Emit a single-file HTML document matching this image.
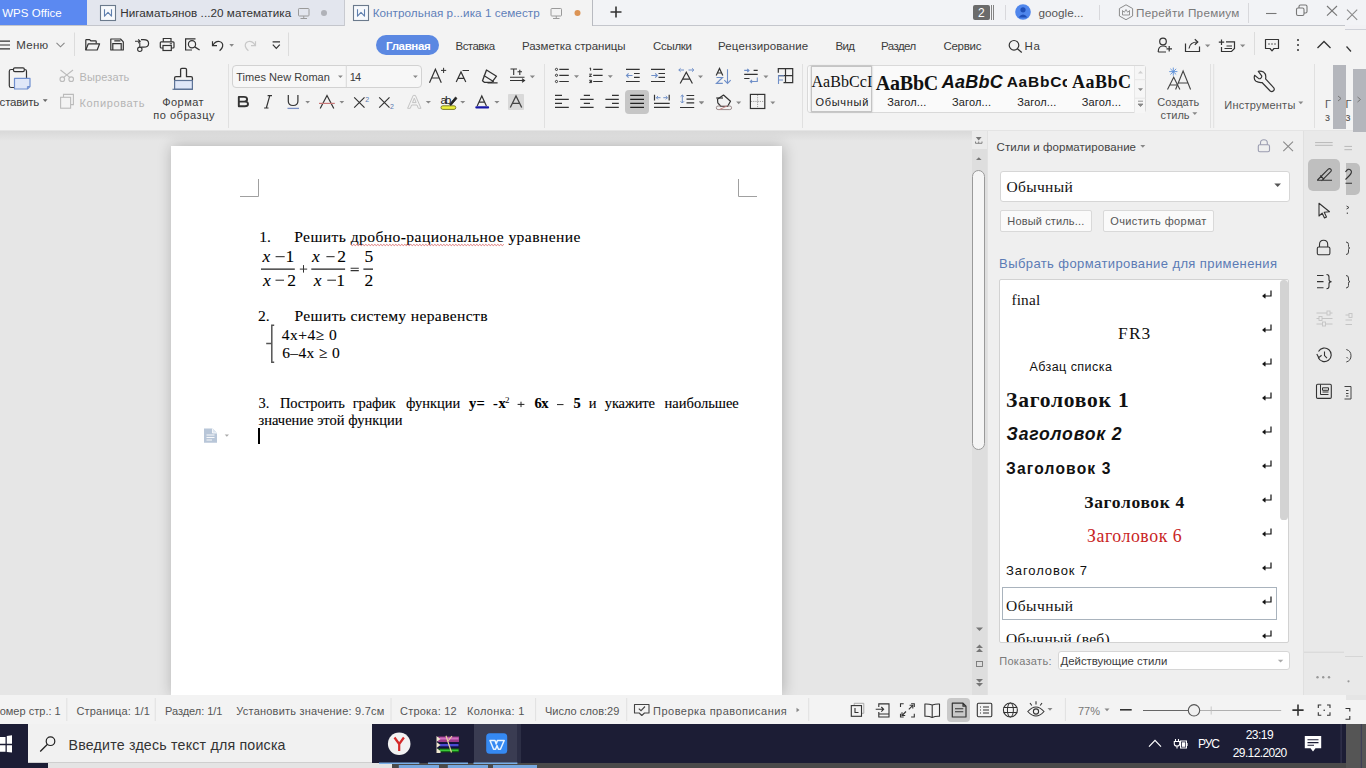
<!DOCTYPE html>
<html><head><meta charset="utf-8">
<style>
*{margin:0;padding:0;box-sizing:border-box}
html,body{width:1366px;height:768px;overflow:hidden;background:#f3f3f3;font-family:"Liberation Sans",sans-serif;position:relative}
.a{position:absolute}
.t{position:absolute;white-space:nowrap;-webkit-font-smoothing:antialiased}
svg{position:absolute;overflow:visible}
</style></head><body>
<div class="a" style="left:0px;top:0px;width:1366px;height:26px;background:#f2f3f6;border-bottom:1px solid #c4c6cc"></div>
<div class="a" style="left:0px;top:0px;width:87px;height:25px;background:#5b89f1;"></div>
<div class="a" style="left:87px;top:0px;width:257px;height:25px;background:#e3e6ee;"></div>
<div class="a" style="left:344px;top:0px;width:248.8px;height:26px;background:#f3f3f3;border-left:1px solid #c8cad0;border-right:1px solid #b8bac0"></div>
<div class="a" style="left:0px;top:26px;width:1366px;height:105px;background:#f3f3f3;border-bottom:1px solid #e4e4e4"></div>
<div class="a" style="left:0px;top:131px;width:972px;height:564px;background:#e6e6e6;"></div>
<div class="a" style="left:0px;top:131px;width:972px;height:10px;background:linear-gradient(#d9d9d9,#e6e6e6);"></div>
<div class="a" style="left:171px;top:146px;width:611px;height:549px;background:#fff;box-shadow:1px 0 14px rgba(0,0,0,0.24)"></div>
<div class="a" style="left:972px;top:131px;width:15px;height:564px;background:#dedede;"></div>
<div class="a" style="left:972px;top:131px;width:15px;height:17.5px;background:#ebebeb;"></div>
<div class="a" style="left:987px;top:131px;width:316px;height:564px;background:#efefef;border-left:1px solid #e2e2e2"></div>
<div class="a" style="left:1303px;top:131px;width:63px;height:564px;background:#e9e9e9;border-left:1px solid #e0e0e0"></div>
<div class="a" style="left:0px;top:695px;width:1366px;height:29px;background:#f3f3f3;"></div>
<div class="a" style="left:0px;top:724px;width:1346px;height:40px;background:#1c1d35;"></div>
<div class="a" style="left:0px;top:763px;width:1366px;height:5px;background:#4a4a4a;"></div>
<div class="a" style="left:0px;top:763px;width:48px;height:5px;background:#1c1d35;"></div>
<div class="a" style="left:48px;top:763px;width:344px;height:5px;background:#e4e4e4;"></div>
<div class="a" style="left:1346px;top:724px;width:20px;height:44px;background:#555555;"></div>
<div class="a" style="left:28px;top:724px;width:344px;height:39px;background:#f1f1f1;border-bottom:1px solid #cfcfcf"></div>
<div class="a" style="left:231.5px;top:64.5px;width:190px;height:23px;background:#f7f7f7;border:1px solid #d2d2d2;border-radius:4px"></div>
<div class="a" style="left:973px;top:4.5px;width:17px;height:15.5px;background:#6b6b6b;border-radius:2px"></div>
<div class="a" style="left:807.3px;top:64.6px;width:339.1px;height:48.6px;background:#fafafa;border:1px solid #d9d9d9;border-radius:3px"></div>
<div class="a" style="left:810.5px;top:66.4px;width:61.5px;height:45.4px;background:#f5f5f5;border:1px solid #c4c4c4;box-shadow:0 0 2px rgba(0,0,0,0.25)"></div>
<div class="a" style="left:1134.3px;top:65.5px;width:11.2px;height:47px;background:#f6f6f6;border-left:1px solid #e8e8e8"></div>
<div class="a" style="left:1000px;top:171px;width:289.5px;height:30.5px;background:#fff;border:1px solid #d6d6d6;border-radius:3px"></div>
<div class="a" style="left:1000px;top:209.8px;width:91.5px;height:21.8px;background:#fafafa;border:1px solid #d9d9d9;border-radius:2px"></div>
<div class="a" style="left:1102.6px;top:209.8px;width:111px;height:21.8px;background:#fafafa;border:1px solid #d9d9d9;border-radius:2px"></div>
<div class="a" style="left:999.4px;top:278.6px;width:289.5px;height:364.5px;background:#fff;border:1px solid #d2d2d2;border-radius:2px"></div>
<div class="a" style="left:1002px;top:586.7px;width:275px;height:33px;background:#fff;border:1px solid #a9b3bd"></div>
<div class="a" style="left:1057.6px;top:651.3px;width:232px;height:18.8px;background:#fff;border:1px solid #d6d6d6;border-radius:3px"></div>
<div class="a" style="left:1308.1px;top:159px;width:31.7px;height:31.7px;background:#bfbfbf;border-radius:5px"></div>
<div class="a" style="left:1345.6px;top:163.1px;width:14.1px;height:31.7px;background:#bfbfbf;border-radius:0 5px 5px 0"></div>
<div class="a" style="left:947.1px;top:698px;width:22.5px;height:24px;background:#c9c9c9;border-radius:4px"></div>
<div class="t" style="left:2.20px;top:7.67px;font-size:11.5px;line-height:11.5px;color:#fff;font-family:'Liberation Sans',sans-serif;letter-spacing:0.031px;">WPS Office</div>
<div class="t" style="left:120.20px;top:7.40px;font-size:11.7px;line-height:11.7px;color:#333;font-family:'Liberation Sans',sans-serif;letter-spacing:0.037px;">Нигаматьянов ...20 математика</div>
<div class="t" style="left:372.70px;top:7.40px;font-size:11.7px;line-height:11.7px;color:#5f7fb9;font-family:'Liberation Sans',sans-serif;letter-spacing:0.053px;">Контрольная р...ика 1 семестр</div>
<div class="t" style="left:1038.50px;top:7.00px;font-size:11.7px;line-height:11.7px;color:#555;font-family:'Liberation Sans',sans-serif;letter-spacing:0.020px;">google...</div>
<div class="t" style="left:1136.00px;top:7.20px;font-size:11.7px;line-height:11.7px;color:#7a7a7a;font-family:'Liberation Sans',sans-serif;letter-spacing:0.295px;">Перейти Премиум</div>
<div class="t" style="left:16.20px;top:39.67px;font-size:11.5px;line-height:11.5px;color:#3c3c3c;font-family:'Liberation Sans',sans-serif;letter-spacing:0.307px;">Меню</div>
<div class="t" style="left:455.50px;top:41.27px;font-size:11.5px;line-height:11.5px;color:#3c3c3c;font-family:'Liberation Sans',sans-serif;letter-spacing:-0.524px;">Вставка</div>
<div class="t" style="left:521.90px;top:41.27px;font-size:11.5px;line-height:11.5px;color:#3c3c3c;font-family:'Liberation Sans',sans-serif;letter-spacing:-0.039px;">Разметка страницы</div>
<div class="t" style="left:652.90px;top:41.27px;font-size:11.5px;line-height:11.5px;color:#3c3c3c;font-family:'Liberation Sans',sans-serif;letter-spacing:-0.277px;">Ссылки</div>
<div class="t" style="left:718.10px;top:41.27px;font-size:11.5px;line-height:11.5px;color:#3c3c3c;font-family:'Liberation Sans',sans-serif;letter-spacing:0.100px;">Рецензирование</div>
<div class="t" style="left:835.40px;top:41.27px;font-size:11.5px;line-height:11.5px;color:#3c3c3c;font-family:'Liberation Sans',sans-serif;letter-spacing:-0.652px;">Вид</div>
<div class="t" style="left:881.00px;top:41.27px;font-size:11.5px;line-height:11.5px;color:#3c3c3c;font-family:'Liberation Sans',sans-serif;letter-spacing:-0.542px;">Раздел</div>
<div class="t" style="left:943.50px;top:41.27px;font-size:11.5px;line-height:11.5px;color:#3c3c3c;font-family:'Liberation Sans',sans-serif;letter-spacing:-0.296px;">Сервис</div>
<div class="t" style="left:1024.40px;top:41.27px;font-size:11.5px;line-height:11.5px;color:#3c3c3c;font-family:'Liberation Sans',sans-serif;letter-spacing:0.799px;">На</div>
<div class="a" style="left:376px;top:35px;width:63px;height:20px;background:#5b88e2;border-radius:10px"></div>
<div class="t" style="left:386.10px;top:41.27px;font-size:11.5px;line-height:11.5px;color:#fff;font-family:'Liberation Sans',sans-serif;font-weight:700;letter-spacing:-0.362px;">Главная</div>
<div class="t" style="left:-7.80px;top:97.47px;font-size:11.5px;line-height:11.5px;color:#3c3c3c;font-family:'Liberation Sans',sans-serif;letter-spacing:-0.249px;">Вставить</div>
<div class="t" style="left:79.50px;top:71.89px;font-size:11px;line-height:11px;color:#b5b5b5;font-family:'Liberation Sans',sans-serif;letter-spacing:0.125px;">Вырезать</div>
<div class="t" style="left:79.50px;top:97.59px;font-size:11px;line-height:11px;color:#b5b5b5;font-family:'Liberation Sans',sans-serif;letter-spacing:0.641px;">Копировать</div>
<div class="t" style="left:162.20px;top:96.99px;font-size:11px;line-height:11px;color:#3c3c3c;font-family:'Liberation Sans',sans-serif;letter-spacing:0.465px;">Формат</div>
<div class="t" style="left:153.20px;top:110.49px;font-size:11px;line-height:11px;color:#3c3c3c;font-family:'Liberation Sans',sans-serif;letter-spacing:0.533px;">по образцу</div>
<div class="t" style="left:236.20px;top:71.89px;font-size:11px;line-height:11px;color:#3c3c3c;font-family:'Liberation Sans',sans-serif;letter-spacing:0.042px;">Times New Roman</div>
<div class="t" style="left:349.70px;top:71.89px;font-size:11px;line-height:11px;color:#3c3c3c;font-family:'Liberation Sans',sans-serif;letter-spacing:-0.735px;">14</div>
<div class="t" style="left:1157.30px;top:97.49px;font-size:11px;line-height:11px;color:#555;font-family:'Liberation Sans',sans-serif;letter-spacing:0.033px;">Создать</div>
<div class="t" style="left:1160.60px;top:109.89px;font-size:11px;line-height:11px;color:#555;font-family:'Liberation Sans',sans-serif;letter-spacing:0.042px;">стиль</div>
<div class="t" style="left:1224.30px;top:100.19px;font-size:11px;line-height:11px;color:#555;font-family:'Liberation Sans',sans-serif;letter-spacing:0.241px;">Инструменты</div>
<div class="t" style="left:996.60px;top:141.67px;font-size:11.5px;line-height:11.5px;color:#444;font-family:'Liberation Sans',sans-serif;letter-spacing:0.054px;">Стили и форматирование</div>
<div class="t" style="left:1006.40px;top:179.12px;font-size:15.5px;line-height:15.5px;color:#111;font-family:'Liberation Serif',serif;letter-spacing:0.334px;">Обычный</div>
<div class="t" style="left:1007.30px;top:215.69px;font-size:11px;line-height:11px;color:#555;font-family:'Liberation Sans',sans-serif;letter-spacing:0.145px;">Новый стиль...</div>
<div class="t" style="left:1110.20px;top:215.59px;font-size:11px;line-height:11px;color:#555;font-family:'Liberation Sans',sans-serif;letter-spacing:0.393px;">Очистить формат</div>
<div class="t" style="left:999.10px;top:256.80px;font-size:13px;line-height:13px;color:#5b7bb5;font-family:'Liberation Sans',sans-serif;letter-spacing:0.406px;">Выбрать форматирование для применения</div>
<div class="t" style="left:1011.40px;top:291.59px;font-size:15.3px;line-height:15.3px;color:#111;font-family:'Liberation Serif',serif;letter-spacing:0.192px;">final</div>
<div class="t" style="left:1118.10px;top:324.83px;font-size:17.4px;line-height:17.4px;color:#111;font-family:'Liberation Serif',serif;letter-spacing:1.117px;">FR3</div>
<div class="t" style="left:1029.40px;top:360.52px;font-size:12.5px;line-height:12.5px;color:#111;font-family:'Liberation Sans',sans-serif;letter-spacing:0.456px;">Абзац списка</div>
<div class="t" style="left:1006.00px;top:390.19px;font-size:21.5px;line-height:21.5px;color:#111;font-family:'Liberation Serif',serif;font-weight:700;letter-spacing:0.790px;">Заголовок 1</div>
<div class="t" style="left:1006.50px;top:426.10px;font-size:17.6px;line-height:17.6px;color:#111;font-family:'Liberation Sans',sans-serif;font-weight:700;font-style:italic;letter-spacing:0.823px;">Заголовок 2</div>
<div class="t" style="left:1006.00px;top:460.59px;font-size:15.6px;line-height:15.6px;color:#111;font-family:'Liberation Sans',sans-serif;font-weight:700;letter-spacing:1.169px;">Заголовок 3</div>
<div class="t" style="left:1084.30px;top:494.34px;font-size:17.5px;line-height:17.5px;color:#111;font-family:'Liberation Serif',serif;font-weight:700;letter-spacing:0.656px;">Заголовок 4</div>
<div class="t" style="left:1087.00px;top:528.39px;font-size:17.8px;line-height:17.8px;color:#c92424;font-family:'Liberation Serif',serif;letter-spacing:0.549px;">Заголовок 6</div>
<div class="t" style="left:1006.10px;top:564.30px;font-size:13px;line-height:13px;color:#111;font-family:'Liberation Sans',sans-serif;letter-spacing:0.904px;">Заголовок 7</div>
<div class="t" style="left:1006.10px;top:597.52px;font-size:15.5px;line-height:15.5px;color:#111;font-family:'Liberation Serif',serif;letter-spacing:0.451px;">Обычный</div>
<div class="a" style="left:1000px;top:622px;width:270px;height:19.5px;overflow:hidden"><div class="t" style="left:6.1px;top:9.4px;font-size:15.5px;line-height:15.5px;color:#111;font-family:'Liberation Serif',serif;letter-spacing:0.25px">Обычный (веб)</div></div>
<div class="t" style="left:999.20px;top:656.19px;font-size:11px;line-height:11px;color:#7a7a7a;font-family:'Liberation Sans',sans-serif;letter-spacing:0.310px;">Показать:</div>
<div class="t" style="left:1060.50px;top:655.85px;font-size:11.4px;line-height:11.4px;color:#3c3c3c;font-family:'Liberation Sans',sans-serif;letter-spacing:-0.005px;">Действующие стили</div>
<div class="t" style="left:259.20px;top:229.34px;font-size:15.6px;line-height:15.6px;color:#000;font-family:'Liberation Serif',serif;-webkit-text-stroke:0.1px #000;">1.</div>
<div class="t" style="left:294.20px;top:229.34px;font-size:15.6px;line-height:15.6px;color:#000;font-family:'Liberation Serif',serif;letter-spacing:0.415px;-webkit-text-stroke:0.1px #000;">Решить дробно-рациональное уравнение</div>
<div class="t" style="left:258.00px;top:307.94px;font-size:15.6px;line-height:15.6px;color:#000;font-family:'Liberation Serif',serif;-webkit-text-stroke:0.1px #000;">2.</div>
<div class="t" style="left:294.50px;top:307.94px;font-size:15.6px;line-height:15.6px;color:#000;font-family:'Liberation Serif',serif;letter-spacing:0.347px;-webkit-text-stroke:0.1px #000;">Решить систему неравенств</div>
<div class="t" style="left:281.80px;top:327.22px;font-size:15.5px;line-height:15.5px;color:#000;font-family:'Liberation Serif',serif;letter-spacing:0.479px;-webkit-text-stroke:0.1px #000;">4x+4≥ 0</div>
<div class="t" style="left:282.20px;top:345.32px;font-size:15.5px;line-height:15.5px;color:#000;font-family:'Liberation Serif',serif;letter-spacing:0.370px;-webkit-text-stroke:0.1px #000;">6–4x ≥ 0</div>
<div class="t" style="left:262.60px;top:248.24px;font-size:17.5px;line-height:17.5px;color:#000;font-family:'Liberation Serif',serif;font-style:italic;-webkit-text-stroke:0.1px #000;">x</div>
<div class="t" style="left:262.90px;top:271.54px;font-size:17.5px;line-height:17.5px;color:#000;font-family:'Liberation Serif',serif;font-style:italic;-webkit-text-stroke:0.1px #000;">x</div>
<div class="t" style="left:312.00px;top:248.24px;font-size:17.5px;line-height:17.5px;color:#000;font-family:'Liberation Serif',serif;font-style:italic;-webkit-text-stroke:0.1px #000;">x</div>
<div class="t" style="left:313.70px;top:271.54px;font-size:17.5px;line-height:17.5px;color:#000;font-family:'Liberation Serif',serif;font-style:italic;-webkit-text-stroke:0.1px #000;">x</div>
<div class="t" style="left:285.50px;top:248.24px;font-size:17.5px;line-height:17.5px;color:#000;font-family:'Liberation Serif',serif;-webkit-text-stroke:0.1px #000;">1</div>
<div class="t" style="left:287.30px;top:271.54px;font-size:17.5px;line-height:17.5px;color:#000;font-family:'Liberation Serif',serif;-webkit-text-stroke:0.1px #000;">2</div>
<div class="t" style="left:337.20px;top:248.24px;font-size:17.5px;line-height:17.5px;color:#000;font-family:'Liberation Serif',serif;-webkit-text-stroke:0.1px #000;">2</div>
<div class="t" style="left:336.30px;top:271.54px;font-size:17.5px;line-height:17.5px;color:#000;font-family:'Liberation Serif',serif;-webkit-text-stroke:0.1px #000;">1</div>
<div class="t" style="left:364.60px;top:248.24px;font-size:17.5px;line-height:17.5px;color:#000;font-family:'Liberation Serif',serif;-webkit-text-stroke:0.1px #000;">5</div>
<div class="t" style="left:364.60px;top:271.54px;font-size:17.5px;line-height:17.5px;color:#000;font-family:'Liberation Serif',serif;-webkit-text-stroke:0.1px #000;">2</div>
<div class="t" style="left:258.40px;top:396.36px;font-size:14.5px;line-height:14.5px;color:#000;font-family:'Liberation Serif',serif;-webkit-text-stroke:0.1px #000;">3.</div>
<div class="t" style="left:279.90px;top:396.36px;font-size:14.5px;line-height:14.5px;color:#000;font-family:'Liberation Serif',serif;letter-spacing:-0.155px;-webkit-text-stroke:0.1px #000;">Построить</div>
<div class="t" style="left:352.80px;top:396.36px;font-size:14.5px;line-height:14.5px;color:#000;font-family:'Liberation Serif',serif;letter-spacing:-0.167px;-webkit-text-stroke:0.1px #000;">график</div>
<div class="t" style="left:406.00px;top:396.36px;font-size:14.5px;line-height:14.5px;color:#000;font-family:'Liberation Serif',serif;letter-spacing:-0.011px;-webkit-text-stroke:0.1px #000;">функции</div>
<div class="t" style="left:468.90px;top:396.36px;font-size:14.5px;line-height:14.5px;color:#000;font-family:'Liberation Serif',serif;font-weight:700;letter-spacing:0.388px;-webkit-text-stroke:0.1px #000;">y=</div>
<div class="t" style="left:493.00px;top:396.36px;font-size:14.5px;line-height:14.5px;color:#000;font-family:'Liberation Serif',serif;font-weight:700;letter-spacing:0.721px;-webkit-text-stroke:0.1px #000;">-x</div>
<div class="t" style="left:534.50px;top:396.36px;font-size:14.5px;line-height:14.5px;color:#000;font-family:'Liberation Serif',serif;font-weight:700;letter-spacing:-0.500px;-webkit-text-stroke:0.1px #000;">6x</div>
<div class="t" style="left:573.50px;top:396.36px;font-size:14.5px;line-height:14.5px;color:#000;font-family:'Liberation Serif',serif;font-weight:700;-webkit-text-stroke:0.1px #000;">5</div>
<div class="t" style="left:588.80px;top:396.36px;font-size:14.5px;line-height:14.5px;color:#000;font-family:'Liberation Serif',serif;-webkit-text-stroke:0.1px #000;">и</div>
<div class="t" style="left:604.80px;top:396.36px;font-size:14.5px;line-height:14.5px;color:#000;font-family:'Liberation Serif',serif;letter-spacing:-0.144px;-webkit-text-stroke:0.1px #000;">укажите</div>
<div class="t" style="left:664.60px;top:396.36px;font-size:14.5px;line-height:14.5px;color:#000;font-family:'Liberation Serif',serif;letter-spacing:-0.009px;-webkit-text-stroke:0.1px #000;">наибольшее</div>
<div class="t" style="left:505.00px;top:395.56px;font-size:9px;line-height:9px;color:#000;font-family:'Liberation Serif',serif;">2</div>
<div class="t" style="left:258.50px;top:413.36px;font-size:14.5px;line-height:14.5px;color:#000;font-family:'Liberation Serif',serif;letter-spacing:-0.001px;-webkit-text-stroke:0.1px #000;">значение этой функции</div>
<div class="t" style="left:-8.30px;top:706.09px;font-size:11px;line-height:11px;color:#555;font-family:'Liberation Sans',sans-serif;letter-spacing:0.012px;">Номер стр.: 1</div>
<div class="t" style="left:76.40px;top:706.09px;font-size:11px;line-height:11px;color:#555;font-family:'Liberation Sans',sans-serif;letter-spacing:0.195px;">Страница: 1/1</div>
<div class="t" style="left:165.10px;top:706.09px;font-size:11px;line-height:11px;color:#555;font-family:'Liberation Sans',sans-serif;letter-spacing:-0.046px;">Раздел: 1/1</div>
<div class="t" style="left:236.30px;top:706.09px;font-size:11px;line-height:11px;color:#555;font-family:'Liberation Sans',sans-serif;letter-spacing:0.223px;">Установить значение: 9.7см</div>
<div class="t" style="left:400.00px;top:706.09px;font-size:11px;line-height:11px;color:#555;font-family:'Liberation Sans',sans-serif;letter-spacing:0.218px;">Строка: 12</div>
<div class="t" style="left:467.00px;top:706.09px;font-size:11px;line-height:11px;color:#555;font-family:'Liberation Sans',sans-serif;letter-spacing:0.331px;">Колонка: 1</div>
<div class="t" style="left:544.90px;top:706.09px;font-size:11px;line-height:11px;color:#555;font-family:'Liberation Sans',sans-serif;letter-spacing:0.043px;">Число слов:29</div>
<div class="t" style="left:653.10px;top:706.09px;font-size:11px;line-height:11px;color:#555;font-family:'Liberation Sans',sans-serif;letter-spacing:0.473px;">Проверка правописания</div>
<div class="t" style="left:1078.00px;top:706.09px;font-size:11px;line-height:11px;color:#777;font-family:'Liberation Sans',sans-serif;letter-spacing:-0.008px;">77%</div>
<div class="t" style="left:68.50px;top:738.18px;font-size:14.2px;line-height:14.2px;color:#333;font-family:'Liberation Sans',sans-serif;letter-spacing:0.211px;">Введите здесь текст для поиска</div>
<div class="t" style="left:1198.00px;top:738.24px;font-size:12px;line-height:12px;color:#fff;font-family:'Liberation Sans',sans-serif;letter-spacing:-1.015px;">РУС</div>
<div class="t" style="left:1245.70px;top:729.24px;font-size:12px;line-height:12px;color:#fff;font-family:'Liberation Sans',sans-serif;letter-spacing:-0.507px;">23:19</div>
<div class="t" style="left:1232.80px;top:747.24px;font-size:12px;line-height:12px;color:#fff;font-family:'Liberation Sans',sans-serif;letter-spacing:-0.618px;">29.12.2020</div>
<div class="t" style="left:978.00px;top:6.94px;font-size:12px;line-height:12px;color:#fff;font-family:'Liberation Sans',sans-serif;">2</div>
<div class="a" style="left:1345px;top:25px;width:21px;height:5px;background:#f1f1f4;border-bottom:1px solid #cfd1d8"></div>
<div class="a" style="left:1333px;top:64.5px;width:13px;height:64px;background:#b4b6bc;"></div>
<div class="a" style="left:1353px;top:69px;width:13px;height:63px;background:#b4b6bc;"></div>
<div class="t" style="left:365.30px;top:95.87px;font-size:7px;line-height:7px;color:#5a7ab0;font-family:'Liberation Sans',sans-serif;">2</div>
<div class="t" style="left:389.90px;top:102.97px;font-size:7px;line-height:7px;color:#5a7ab0;font-family:'Liberation Sans',sans-serif;">2</div>
<div class="t" style="left:440.50px;top:94.77px;font-size:11.5px;line-height:11.5px;color:#222;font-family:'Liberation Sans',sans-serif;letter-spacing:-1.992px;">ab</div>
<div class="a" style="left:508px;top:94px;width:16px;height:15.8px;background:#d9d9d9;border-radius:1px"></div>
<div class="a" style="left:625.2px;top:90px;width:23.5px;height:24px;background:#c6c6c6;border-radius:4px"></div>
<div class="t" style="left:811.40px;top:73.70px;font-size:16px;line-height:16px;color:#111;font-family:'Liberation Serif',serif;letter-spacing:0.095px;">AaBbCcI</div>
<div class="t" style="left:815.50px;top:97.09px;font-size:11px;line-height:11px;color:#222;font-family:'Liberation Sans',sans-serif;letter-spacing:0.697px;">Обычный</div>
<div class="t" style="left:875.80px;top:72.55px;font-size:20px;line-height:20px;color:#111;font-family:'Liberation Serif',serif;font-weight:700;letter-spacing:-0.212px;">AaBbC</div>
<div class="t" style="left:887.30px;top:97.09px;font-size:11px;line-height:11px;color:#222;font-family:'Liberation Sans',sans-serif;letter-spacing:0.144px;">Загол...</div>
<div class="t" style="left:941.70px;top:72.86px;font-size:18px;line-height:18px;color:#111;font-family:'Liberation Sans',sans-serif;font-weight:700;font-style:italic;letter-spacing:0.249px;">AaBbC</div>
<div class="t" style="left:952.00px;top:97.09px;font-size:11px;line-height:11px;color:#222;font-family:'Liberation Sans',sans-serif;letter-spacing:0.144px;">Загол...</div>
<div class="t" style="left:1006.70px;top:74.38px;font-size:15.5px;line-height:15.5px;color:#111;font-family:'Liberation Sans',sans-serif;font-weight:700;letter-spacing:0.742px;">AaBbCc</div>
<div class="a" style="left:1067px;top:70px;width:5px;height:20px;background:#fafafa;"></div>
<div class="t" style="left:1017.20px;top:96.99px;font-size:11px;line-height:11px;color:#222;font-family:'Liberation Sans',sans-serif;letter-spacing:0.144px;">Загол...</div>
<div class="t" style="left:1072.00px;top:73.22px;font-size:18px;line-height:18px;color:#111;font-family:'Liberation Serif',serif;font-weight:700;letter-spacing:0.496px;">AaBbC</div>
<div class="t" style="left:1081.70px;top:96.99px;font-size:11px;line-height:11px;color:#222;font-family:'Liberation Sans',sans-serif;letter-spacing:0.186px;">Загол...</div>
<div class="t" style="left:1325.00px;top:98.69px;font-size:11px;line-height:11px;color:#555;font-family:'Liberation Sans',sans-serif;">Г</div>
<div class="t" style="left:1325.00px;top:111.69px;font-size:11px;line-height:11px;color:#555;font-family:'Liberation Sans',sans-serif;">з</div>
<div class="t" style="left:1345.50px;top:99.19px;font-size:11px;line-height:11px;color:#555;font-family:'Liberation Sans',sans-serif;">Г</div>
<div class="t" style="left:1345.50px;top:112.19px;font-size:11px;line-height:11px;color:#555;font-family:'Liberation Sans',sans-serif;">з</div>
<div class="a" style="left:257.6px;top:428.4px;width:2px;height:15.4px;background:#000;"></div>
<div class="a" style="left:1280.4px;top:280.2px;width:7.2px;height:240px;background:#d3d3d3;border-radius:3.6px"></div>
<div class="a" style="left:972.4px;top:169.5px;width:13px;height:280.5px;background:#f5f5f5;border:1px solid #9a9a9a;border-radius:6.5px"></div>
<div class="a" style="left:1346px;top:695px;width:20px;height:5px;background:#e5e5e5;"></div>
<div class="a" style="left:473.5px;top:724px;width:44px;height:39px;background:#3a3c52;"></div>
<div class="a" style="left:517.4px;top:724px;width:4px;height:39px;background:#2c2e45;"></div>
<svg style="left:0;top:0;pointer-events:none" width="1366" height="768" fill="none" stroke="#333" stroke-width="1.2">
<path d="M517.6,404.4 H524.4 M521,401.7 V407.1 M557,404.6 H563.5" stroke="#222" stroke-width="1"/>
<rect x="100.5" y="5.5" width="15" height="15" stroke="#6b7a8c" stroke-width="1.1" fill="#f7f9fc"/>
<path d="M104.5,9.3 V16.2 L108.0,12.3 L111.5,16.2 V9.3" stroke="#5f7fae" stroke-width="1.1" stroke-linejoin="round"/>
<rect x="353.5" y="5.5" width="15" height="15" stroke="#6b7a8c" stroke-width="1.1" fill="#f7f9fc"/>
<path d="M357.5,9.3 V16.2 L361.0,12.3 L364.5,16.2 V9.3" stroke="#5f7fae" stroke-width="1.1" stroke-linejoin="round"/>
<rect x="298.5" y="8.5" width="10.5" height="7.5" rx="0.8" stroke="#9a9a9a" stroke-width="1"/><path d="M303.75,16 V18.5 M300.5,18.5 H307.0" stroke="#9a9a9a" stroke-width="1"/>
<rect x="551" y="8.5" width="10.5" height="7.5" rx="0.8" stroke="#9a9a9a" stroke-width="1"/><path d="M556.25,16 V18.5 M553,18.5 H559.5" stroke="#9a9a9a" stroke-width="1"/>
<circle cx="324" cy="13" r="3" fill="#b0b2b8" stroke="none"/>
<circle cx="577.5" cy="13" r="3" fill="#dc9455" stroke="none"/>
<path d="M616,6.5 V17.5 M610.5,12 H621.5" stroke="#333" stroke-width="1.6"/>
<path d="M991.5,5 V20 M993.5,5 V20" stroke="#777" stroke-width="0.9"/>
<path d="M1005.5,5 V20 M1099.5,5 V20 M1248.5,3 V23" stroke="#d8d8dc" stroke-width="1"/>
<circle cx="1023" cy="12" r="7.8" fill="#4f86ec" stroke="none"/><circle cx="1023" cy="9.8" r="2.6" fill="#1f4fb8" stroke="none"/><path d="M1018.5,17.5 Q1023,11.5 1027.5,17.5 Z" fill="#1f4fb8" stroke="none"/>
<path d="M1126,4.8 L1132.6,8.5 V16 L1126,19.7 L1119.4,16 V8.5 Z" stroke="#8a8a8a" stroke-width="1"/><path d="M1122.5,15 V10.5 L1124.3,12.3 L1126,9.5 L1127.7,12.3 L1129.5,10.5 V15 Z" stroke="#8a8a8a" stroke-width="0.9"/>
<path d="M1266,13.5 H1276.5" stroke="#777" stroke-width="1.1"/>
<rect x="1296.5" y="8" width="7.5" height="7.5" rx="1.5" stroke="#777" stroke-width="1.1"/><path d="M1299,8 V6.5 Q1299,5 1300.5,5 H1305.5 Q1307,5 1307,6.5 V11.5 Q1307,13 1305.5,13 H1304" stroke="#777" stroke-width="1.1"/>
<path d="M1327,6 L1337,15.7 M1337,6 L1327,15.7" stroke="#777" stroke-width="1.1"/>
<path d="M1347,9.7 L1357.2,19.8 M1357.2,9.7 L1347,19.8" stroke="#8a8a8a" stroke-width="1.1"/>
<path d="M0,41.2 H10 M0,45 H10 M0,48.9 H10" stroke="#333" stroke-width="1.2"/>
<path d="M56.5,42.8 L60.5,46.8 L64.5,42.8" stroke="#888" stroke-width="1.1"/>
<path d="M74.5,32.5 V56 M288.5,32.5 V56 M1254.5,32 V55" stroke="#dcdcdc" stroke-width="1"/>
<path d="M85.8,50 V40.2 Q85.8,39.6 86.4,39.6 H89.5 L90.8,40.8 H95.5 Q96.2,40.8 96.2,41.5 V43.5" stroke-width="1.2"/><path d="M85.8,50 L88.3,43.8 H99.6 L97.2,50 Z" stroke-width="1.2" stroke-linejoin="round"/>
<path d="M110.8,39 H120.5 L123.3,41.8 V50 H110.8 Z" stroke-width="1.2" stroke-linejoin="round"/><path d="M112.8,50 V43.6 H121.2 V50 M114.3,40.8 H120.5" stroke-width="1.2"/>
<path d="M135,41.3 H140 M138.2,39.4 L140.2,41.3 L138.2,43.2" stroke-width="1.1"/><path d="M141,39.6 H143.5 Q148.6,39.6 148.6,43.4 Q148.6,47.2 143.5,47.2 H141.2" stroke-width="1.2"/><path d="M139.8,42.5 V47.5" stroke-width="1.1"/><circle cx="139.8" cy="49.3" r="2.2" stroke-width="1.1"/>
<path d="M163.3,41.8 V38.5 H171 V41.8" stroke-width="1.2"/><path d="M163,48 H161.2 Q160.3,48 160.3,47.1 V42.7 Q160.3,41.8 161.2,41.8 H173.1 Q174,41.8 174,42.7 V47.1 Q174,48 173.1,48 H171.3" stroke-width="1.2"/><rect x="163" y="45.5" width="8.3" height="5" stroke-width="1.2"/><path d="M169.8,43.8 H172" stroke-width="1"/>
<path d="M195.5,38.8 H185.6 V50 H192" stroke-width="1.2"/><circle cx="192" cy="44.2" r="3.6" stroke-width="1.2"/><path d="M194.7,46.9 L199.6,50" stroke-width="1.3"/>
<path d="M212.5,41.2 V45.7 H217" stroke-width="1.2"/><path d="M212.8,45.5 Q215.3,41 219.3,41.5 Q223.4,42.4 222.6,46.5 Q222,48.8 219.6,50.8" stroke-width="1.2"/>
<path d="M229.3,44 H234 L231.65,46.8 Z" fill="#888" stroke="none"/>
<path d="M255.5,41.2 V45.7 H251 M255.2,45.5 Q252.7,41 248.7,41.5 Q244.6,42.4 245.4,46.5 Q246,48.8 248.4,50.8" stroke="#c8c8c8" stroke-width="1.2"/>
<path d="M272.6,41.9 H280 M272.8,44.6 L276.3,48.3 L279.8,44.6" stroke-width="1.2"/>
<circle cx="1014" cy="45.3" r="4.8" stroke-width="1.2"/><path d="M1017.4,48.8 L1021.8,52.4" stroke-width="1.3"/>
<circle cx="1163" cy="41.5" r="3.3" stroke-width="1.2"/><path d="M1158.2,52 Q1158.2,46 1163,46 Q1165.5,46 1166.8,47.3 M1158.2,52 H1166" stroke-width="1.2"/><path d="M1169.2,46 V51.5 M1166.5,48.8 H1172" stroke-width="1.2"/>
<path d="M1185.5,43.5 V51.5 H1199.5 V46.5" stroke-width="1.2"/><path d="M1189,48.5 Q1190,42 1197.5,42" stroke-width="1.2"/><path d="M1194.8,39.2 L1197.8,42 L1194.8,44.8" stroke-width="1.2"/>
<path d="M1205,44.5 H1210.3 L1207.65,47.3 Z M1240,44.5 H1245.3 L1242.65,47.3 Z" fill="#888" stroke="none"/>
<path d="M1221.5,39.5 V45 M1218.8,42.2 H1224.2" stroke-width="1.2"/><path d="M1226,41.8 H1234.5 V48.5 L1231.5,51.5 H1221.5 V47" stroke-width="1.2"/><path d="M1226.5,46 H1232 M1224.5,48.5 H1232" stroke-width="1.1"/>
<path d="M1265.5,39.5 H1278.5 V48.5 H1274 L1272,50.8 L1270,48.5 H1265.5 Z" stroke-width="1.2" stroke-linejoin="round"/><path d="M1268.5,44 H1269.5 M1271.5,44 H1272.5 M1274.5,44 H1275.5" stroke-width="1.4"/>
<circle cx="1298" cy="40" r="1" fill="#333" stroke="none"/><circle cx="1298" cy="45" r="1" fill="#333" stroke="none"/><circle cx="1298" cy="50" r="1" fill="#333" stroke="none"/>
<path d="M1317.5,48 L1324,41.5 L1330.5,48" stroke-width="1.3"/>
<path d="M1346.5,46.5 L1351,51.5" stroke-width="1.2"/>
<rect x="9.3" y="69.5" width="17.2" height="18" rx="1.8" stroke-width="1.2"/><rect x="13.5" y="67.8" width="10.8" height="3.8" rx="1.3" fill="#f3f3f3" stroke-width="1.2"/>
<path d="M14.5,78.4 H30 V86.5 L27.4,89 H14.5 Z" fill="#dfe7f8" stroke="#6f8fd0" stroke-width="1.2" stroke-linejoin="round"/><path d="M27.4,89 V86.5 H30" stroke="#6f8fd0" stroke-width="1"/>
<path d="M42.8,99.2 H47.6 L45.2,101.9 Z" fill="#666" stroke="none"/>
<circle cx="62.3" cy="79.2" r="2.3" stroke="#bbb" stroke-width="1.1"/><circle cx="71.2" cy="79.2" r="2.3" stroke="#bbb" stroke-width="1.1"/><path d="M60.5,70 L69.8,77.4 M73,70 L63.7,77.4" stroke="#bbb" stroke-width="1.1"/>
<path d="M63.5,97 V94.4 H73.4 V104.6 H70.6" stroke="#bbb" stroke-width="1.1"/><rect x="60.6" y="97.3" width="10" height="10.9" stroke="#bbb" stroke-width="1.1"/>
<path d="M174.6,80.5 V78 Q174.6,76.6 176,76.6 H180.6 V69.6 Q180.6,68.4 181.8,68.4 H185.3 Q186.5,68.4 186.5,69.6 V76.6 H191 Q192.4,76.6 192.4,78 V80.5" stroke-width="1.3"/>
<rect x="174.6" y="80.5" width="17.8" height="8.8" fill="#dfe7f8" stroke="#5d7396" stroke-width="1.2"/><path d="M172.5,89.3 H192.4" stroke="#5d7396" stroke-width="1.2"/>
<path d="M228.5,64 V128 M544.5,64 V128 M802.5,64 V128 M1210.5,64 V128 M1213.7,64 V128 M1314.5,64 V128" stroke="#e0e0e0" stroke-width="1"/>
<path d="M346.3,65 V87" stroke="#d8d8d8" stroke-width="1"/>
<path d="M338,75.5 H342.8 L340.4,78 Z M413,75.5 H417.8 L415.4,78 Z" fill="#888" stroke="none"/>
<path d="M429.5,82.8 L435.4,69.2 L441.3,82.8 M431.6,78 H439.2" stroke-width="1.2"/><path d="M443.6,67.8 V73 M441,70.4 H446.2" stroke-width="1"/>
<path d="M456.2,82 L461,72 L465.8,82 M457.9,78.3 H464.1" stroke-width="1.2"/><path d="M462.5,70.5 H469" stroke-width="1"/>
<path d="M486.5,70 L496.5,76.2 L491.8,82.3 L484.3,82.3 L482.5,80.8 Z" stroke-width="1.3" stroke-linejoin="round"/><path d="M483.8,75.5 L493.8,81.7 M487.5,82.8 H497.6" stroke-width="1.2"/>
<path d="M510.5,69 H517 M513.7,69 V75 M517.5,71.8 H522 M519.8,69.8 V75" stroke-width="1.1"/><path d="M510,77.3 H524.5 M510,80.5 H524.5 M522,78.8 L524.5,80.5 L522,82.2" stroke-width="1.1"/>
<path d="M529.8,75.6 H535 L532.4,78.3 Z" fill="#888" stroke="none"/>
<path d="M238.8,96.9 H243.8 Q247.1,96.9 247.1,99.3 Q247.1,101.6 244.2,101.6 H238.8 Z M238.8,101.6 H244.8 Q248,101.6 248,104 Q248,106.3 244.8,106.3 H238.8 Z" stroke-width="1.9" stroke-linejoin="round"/>
<path d="M267.6,95.6 H272 M264.1,108 H268.5 M269.8,95.6 L266.3,108" stroke-width="1.2"/>
<path d="M288.3,95 V101.3 Q288.3,105.5 293.1,105.5 Q297.9,105.5 297.9,101.3 V95" stroke-width="1.2"/><path d="M287.5,108.4 H299" stroke="#7a8fc4" stroke-width="1.3"/>
<path d="M320.2,108.5 L327,95.5 L333.8,108.5" stroke-width="1.2"/><path d="M319,103.4 H334.8" stroke="#c87878" stroke-width="1.2"/>
<path d="M305.3,101 H310 L307.65,103.5 Z M339.5,101 H344.2 L341.85,103.5 Z M425.8,101 H431 L428.4,103.5 Z M460.2,101 H465.3 L462.75,103.5 Z M494.3,101 H499.5 L496.9,103.5 Z" fill="#888" stroke="none"/>
<path d="M354.2,97.4 L364.5,107.6 M364.5,97.4 L354.2,107.6 M379.2,97.4 L389.5,107.6 M389.5,97.4 L379.2,107.6" stroke-width="1.2"/>
<path d="M407.6,108.3 L413.2,95.4 H415.4 L421,108.3 H418.3 L417,105 H411.6 L410.3,108.3 Z M412.5,102.6 H416.1 L414.3,98.2 Z" stroke="#c4c4c4" stroke-width="1" stroke-linejoin="round"/>
<rect x="441" y="105.8" width="14.8" height="3.6" rx="1.8" fill="#eef03a" stroke="#6f7020" stroke-width="0.9"/>
<path d="M449.5,104.3 L455.5,97 L457,98.4 L451,105.4 Z" fill="#222" stroke="#222" stroke-width="0.8"/>
<path d="M477.2,106 L481.8,96 L486.4,106 M479,102.2 H484.6" stroke-width="1.2"/><rect x="475.3" y="106.2" width="13.8" height="2.3" rx="1" fill="#1818a8" stroke="none"/>
<path d="M510.3,107.5 L516,96 L521.7,107.5 M512.4,103.3 H519.6" stroke="#444" stroke-width="1.3"/>
<circle cx="556.5" cy="69.4" r="1.1" stroke-width="1"/><circle cx="556.5" cy="75.3" r="1.1" stroke-width="1"/><circle cx="556.5" cy="81.5" r="1.1" stroke-width="1"/><path d="M559.3,69.4 H568.8 M559.3,75.3 H568.8 M559.3,81.5 H568.8" stroke-width="1.2"/>
<path d="M574,75.2 H579 L576.5,77.9 Z" fill="#888" stroke="none"/>
<path d="M589.6,68.3 L590.6,68 V70.6 M589.2,74.2 H591.6 L589.2,76.4 H591.8 M589.2,80.3 H591.6 V82.6 H589.2 M589.8,81.5 H591.6" stroke-width="1"/><path d="M593.2,69.4 H602.6 M593.2,75.3 H602.6 M593.2,81.5 H602.6" stroke-width="1.2"/>
<path d="M607.8,75.2 H612.8 L610.3,77.9 Z" fill="#888" stroke="none"/>
<path d="M626,69.4 H639.7 M634,73.5 H639.7 M634,77.4 H639.7 M626,81.5 H639.7" stroke-width="1.2"/><path d="M626.5,75.5 H632.5 M628.6,73.4 L626.5,75.5 L628.6,77.6" stroke="#6f8fc8" stroke-width="1.1"/>
<path d="M651,69.4 H665 M658.5,73.5 H665 M658.5,77.4 H665 M651,81.5 H665" stroke-width="1.2"/><path d="M651.3,75.5 H657.3 M655.2,73.4 L657.3,75.5 L655.2,77.6" stroke="#6f8fc8" stroke-width="1.1"/>
<path d="M680.2,83.5 L686.3,72.3 L692.4,83.5 M682.6,79.2 H690" stroke-width="1.2"/><path d="M678.8,70 H684 M680.6,68.3 L678.8,70 L680.6,71.7 M688.5,70 H693.8 M692,68.3 L693.8,70 L692,71.7" stroke="#6f8fc8" stroke-width="1"/>
<path d="M698,75.5 H703 L700.5,78.2 Z" fill="#888" stroke="none"/>
<path d="M716.2,75.6 L719.5,68.4 L722.8,75.6 M717.5,73 H721.5" stroke-width="1.2"/><path d="M716.5,77.5 H722.5 L716.5,83.4 H722.8" stroke="#6f8fc8" stroke-width="1.2"/><path d="M727.5,69.2 V83.4 M724.3,80.2 L727.5,83.5 L730.7,80.2" stroke="#6f8fc8" stroke-width="1.1"/>
<path d="M753.6,70.4 H757.7 M744.2,74.3 H757.7 M744.2,78.5 H749.5" stroke-width="1.2"/><path d="M744.2,70.4 H749 M747.3,68.8 L749,70.4 L747.3,72 M757.3,77.5 V81.5 H750.3 M752,79.8 L750.3,81.5 L752,83.2" stroke="#6f8fc8" stroke-width="1.1"/>
<path d="M763.4,75.5 H768.4 L765.9,78.2 Z" fill="#888" stroke="none"/>
<path d="M778.3,72.7 V68.6 H792.7 V82.7 H783.5 M785.5,68.6 V82.7 M778.3,75.7 H792.7" stroke-width="1.2"/><path d="M778.5,84 V75.8 H784 M778.5,80 H783" stroke="#6f8fc8" stroke-width="1.1"/>
<path d="M555,95.3 H562 M555,99.3 H568.8 M555,103.4 H562 M555,107.4 H568.8" stroke-width="1.2"/>
<path d="M583.8,95.3 H590 M580.2,99.3 H593.6 M583.8,103.4 H590 M580.2,107.4 H593.6" stroke-width="1.2"/>
<path d="M612,95.3 H618.8 M605.4,99.3 H618.8 M612,103.4 H618.8 M605.4,107.4 H618.8" stroke-width="1.2"/>
<path d="M630.2,95.3 H644 M630.2,99.3 H644 M630.2,103.4 H644 M630.2,107.4 H644" stroke="#222" stroke-width="1.3"/>
<path d="M654.5,94.8 V100.6 M669.2,94.8 V100.6 M654,103.4 H669.7 M654,107.4 H669.7" stroke-width="1.2"/><path d="M656.5,97.7 H660.5 M658,96 L656.3,97.7 L658,99.4 M663.3,97.7 H667.3 M665.8,96 L667.5,97.7 L665.8,99.4" stroke="#6f8fc8" stroke-width="1"/>
<path d="M686.5,95.5 H694.2 M686.5,99.2 H694.2 M686.5,102.9 H694.2 M680,107.5 H694.2" stroke-width="1.2"/><path d="M682.3,95 V103 M680.6,96.7 L682.3,95 L684,96.7 M680.6,101.3 L682.3,103 L684,101.3" stroke="#6f8fc8" stroke-width="1"/>
<path d="M699,101.5 H704 L701.5,104.2 Z" fill="#888" stroke="none"/>
<path d="M717.5,99.2 L723.5,95 L730.5,101.2 L727.5,106.5 H721 L717.8,102.8 Z" stroke-width="1.2" stroke-linejoin="round"/><path d="M716.2,98 H723" stroke-width="1.2"/><rect x="716.3" y="106" width="15.3" height="3.6" rx="1.8" stroke="#9a8a8a" stroke-width="1"/><path d="M719.5,109.5 L727,106" stroke="#c88" stroke-width="1"/>
<path d="M736.2,101.5 H741.2 L738.7,104.2 Z" fill="#888" stroke="none"/>
<rect x="750.4" y="94.4" width="14.4" height="14.1" stroke-width="1.2"/><path d="M757.6,95 V108 M751,101.45 H764.2" stroke="#888" stroke-width="0.8" stroke-dasharray="1.2,1"/>
<path d="M770.3,101.5 H775.3 L772.8,104.2 Z" fill="#888" stroke="none"/>
<path d="M699,101.5 H704 L701.5,104.2 Z" fill="#888" stroke="none"/>
<path d="M1135,79.7 H1145.5 M1135,98.2 H1145.5" stroke="#e6e6e6" stroke-width="1"/>
<path d="M1138,73.5 H1143 L1140.5,70.8 Z" fill="#d0d0d0" stroke="none"/><path d="M1138,88.2 H1143 L1140.5,90.9 Z" fill="#888" stroke="none"/><path d="M1138,101.2 H1143 M1138,104 H1143 L1140.5,106.6 Z" stroke="#888" fill="#888" stroke-width="0.9"/>
<path d="M1167.5,89.5 L1173.7,77.3 L1179.9,89.5 M1169.8,85 H1177.6" stroke="#444" stroke-width="1.1"/><path d="M1175.6,89.5 L1183.1,71 L1190.6,89.5 M1178.3,83 H1187.9" stroke="#444" stroke-width="1.1"/>
<path d="M1173.3,67.6 V75.7 M1169.2,71.6 H1177.4 M1170.4,68.8 L1176.2,74.5 M1176.2,68.8 L1170.4,74.5" stroke="#5b8fd8" stroke-width="0.9"/>
<path d="M1192.3,112.2 H1197.3 L1194.8,114.9 Z" fill="#888" stroke="none"/>
<path d="M1258.3,71.3 L1261.7,75.9 Q1262,77 1260.8,78.2 Q1259.6,79.2 1258.5,78.4 L1254.6,75.3 Q1253.4,79.5 1256,81.3 Q1258.5,82.8 1262,82.5 L1270.2,91 Q1271.8,92.4 1273.5,90.8 Q1275,89.2 1273.6,87.6 L1265.6,78.9 Q1266.5,74 1263.5,72 Q1261,70.8 1258.3,71.3 Z" stroke-width="1.2" stroke-linejoin="round"/>
<path d="M1298.3,101.5 H1303.3 L1300.8,104.2 Z" fill="#888" stroke="none"/>
<path d="M1338,96 L1341,98.5 L1338,101" stroke="#777" stroke-width="1"/>
<path d="M1357.5,97 L1360.5,99.5 L1357.5,102" stroke="#777" stroke-width="1"/>
<path d="M258.5,179 V196.5 H240 M738.5,179 V196.5 H757" stroke="#a0a0a0" stroke-width="1"/>
<path d="M350.8,244.4 L352.3,245.6 L353.8,244.4 L355.3,245.6 L356.8,244.4 L358.3,245.6 L359.8,244.4 L361.3,245.6 L362.8,244.4 L364.3,245.6 L365.8,244.4 L367.3,245.6 L368.8,244.4 L370.3,245.6 L371.8,244.4 L373.3,245.6 L374.8,244.4 L376.3,245.6 L377.8,244.4 L379.3,245.6 L380.8,244.4 L382.3,245.6 L383.8,244.4 L385.3,245.6 L386.8,244.4 L388.3,245.6 L389.8,244.4 L391.3,245.6 L392.8,244.4 L394.3,245.6 L395.8,244.4 L397.3,245.6 L398.8,244.4 L400.3,245.6 L401.8,244.4 L403.3,245.6 L404.8,244.4 L406.3,245.6 L407.8,244.4 L409.3,245.6 L410.8,244.4 L412.3,245.6 L413.8,244.4 L415.3,245.6 L416.8,244.4 L418.3,245.6 L419.8,244.4 L421.3,245.6 L422.8,244.4 L424.3,245.6 L425.8,244.4 L427.3,245.6 L428.8,244.4 L430.3,245.6 L431.8,244.4 L433.3,245.6 L434.8,244.4 L436.3,245.6 L437.8,244.4 L439.3,245.6 L440.8,244.4 L442.3,245.6 L443.8,244.4 L445.3,245.6 L446.8,244.4 L448.3,245.6 L449.8,244.4 L451.3,245.6 L452.8,244.4 L454.3,245.6 L455.8,244.4 L457.3,245.6 L458.8,244.4 L460.3,245.6 L461.8,244.4 L463.3,245.6 L464.8,244.4 L466.3,245.6 L467.8,244.4 L469.3,245.6 L470.8,244.4 L472.3,245.6 L473.8,244.4 L475.3,245.6 L476.8,244.4 L478.3,245.6 L479.8,244.4 L481.3,245.6 L482.8,244.4 L484.3,245.6 L485.8,244.4 L487.3,245.6 L488.8,244.4 L490.3,245.6 L491.8,244.4 L493.3,245.6 L494.8,244.4 L496.3,245.6 L497.8,244.4 L499.3,245.6 L500.8,244.4 L502.3,245.6 L503.8,244.4" stroke="#d04040" stroke-width="0.7"/>
<path d="M261,269.1 H294.8 M311.3,269.1 H345.1 M363.4,269.1 H373" stroke="#222" stroke-width="1.1"/>
<path d="M275.6,256.7 H284.7 M275.5,280.2 H284 M326.4,256.7 H334.6 M327.3,280.2 H336" stroke="#222" stroke-width="1"/>
<path d="M299.8,269.1 H307.2 M303.5,265.1 V272.6" stroke="#333" stroke-width="1"/>
<path d="M350.6,268.3 H358.8 M350.6,270.6 H358.8" stroke="#333" stroke-width="1.1"/>
<path d="M274.2,325.2 H271.8 V362.2 H274.2 M266.2,343.5 H271.8" stroke="#555" stroke-width="1.5"/>
<path d="M204,428.5 H212.5 L217,433 V442.7 H204 Z" fill="#b8c6d8" stroke="none"/><path d="M212.5,428.5 V433 H217" fill="#dde5ef" stroke="#fff" stroke-width="0.8"/><path d="M206.5,435 H214.5 M206.5,437.5 H214.5 M206.5,440 H212" stroke="#fff" stroke-width="0.9"/>
<path d="M224.7,434.5 H229 L226.85,436.8 Z" fill="#aaa" stroke="none"/>
<path d="M1140.3,145 H1145.3 L1142.8,147.7 Z" fill="#888" stroke="none"/>
<rect x="1258.3" y="144.8" width="11.2" height="7" rx="1.5" stroke="#9a9cb0" stroke-width="1.1"/><path d="M1260.5,144.8 V142.8 Q1260.5,139.8 1263.9,139.8 Q1267.3,139.8 1267.3,142.8 V144.8" stroke="#9a9cb0" stroke-width="1.1"/>
<path d="M1283.3,141.7 L1293,151.2 M1293,141.7 L1283.3,151.2" stroke="#8a8a8a" stroke-width="1.1"/>
<path d="M1274.3,183.5 H1281 L1277.65,187 Z" fill="#555" stroke="none"/>
<path d="M1277.8,659.8 H1283.3 L1280.55,662.5 Z" fill="#aaa" stroke="none"/>
<path d="M1271,290.5 V296.0 H1263" stroke="#111" stroke-width="1.2"/><path d="M1265.2,293.8 L1262.5,296.0 L1265.2,298.2 Z" fill="#111" stroke="#111" stroke-width="0.6"/>
<path d="M1271,324.5 V330.0 H1263" stroke="#111" stroke-width="1.2"/><path d="M1265.2,327.8 L1262.5,330.0 L1265.2,332.2 Z" fill="#111" stroke="#111" stroke-width="0.6"/>
<path d="M1271,358.5 V364.0 H1263" stroke="#111" stroke-width="1.2"/><path d="M1265.2,361.8 L1262.5,364.0 L1265.2,366.2 Z" fill="#111" stroke="#111" stroke-width="0.6"/>
<path d="M1271,392.5 V398.0 H1263" stroke="#111" stroke-width="1.2"/><path d="M1265.2,395.8 L1262.5,398.0 L1265.2,400.2 Z" fill="#111" stroke="#111" stroke-width="0.6"/>
<path d="M1271,426.5 V432.0 H1263" stroke="#111" stroke-width="1.2"/><path d="M1265.2,429.8 L1262.5,432.0 L1265.2,434.2 Z" fill="#111" stroke="#111" stroke-width="0.6"/>
<path d="M1271,460.5 V466.0 H1263" stroke="#111" stroke-width="1.2"/><path d="M1265.2,463.8 L1262.5,466.0 L1265.2,468.2 Z" fill="#111" stroke="#111" stroke-width="0.6"/>
<path d="M1271,494.5 V500.0 H1263" stroke="#111" stroke-width="1.2"/><path d="M1265.2,497.8 L1262.5,500.0 L1265.2,502.2 Z" fill="#111" stroke="#111" stroke-width="0.6"/>
<path d="M1271,528.5 V534.0 H1263" stroke="#111" stroke-width="1.2"/><path d="M1265.2,531.8 L1262.5,534.0 L1265.2,536.2 Z" fill="#111" stroke="#111" stroke-width="0.6"/>
<path d="M1271,562.5 V568.0 H1263" stroke="#111" stroke-width="1.2"/><path d="M1265.2,565.8 L1262.5,568.0 L1265.2,570.2 Z" fill="#111" stroke="#111" stroke-width="0.6"/>
<path d="M1271,596.5 V602.0 H1263" stroke="#111" stroke-width="1.2"/><path d="M1265.2,599.8 L1262.5,602.0 L1265.2,604.2 Z" fill="#111" stroke="#111" stroke-width="0.6"/>
<path d="M1271,630.5 V636.0 H1263" stroke="#111" stroke-width="1.2"/><path d="M1265.2,633.8 L1262.5,636.0 L1265.2,638.2 Z" fill="#111" stroke="#111" stroke-width="0.6"/>
<path d="M975.8,137 H981.6 L978.7,140.5 Z" fill="#777" stroke="none"/><path d="M975.5,143.3 H982 M975.5,141.5 V143.3 M978.7,141.5 V143.3 M982,141.5 V143.3" stroke="#777" stroke-width="0.9"/>
<path d="M976,160 H981.6 L978.8,157.2 Z" fill="#777" stroke="none"/>
<path d="M976,627.5 H983 L979.5,631 Z" fill="#777" stroke="none"/>
<path d="M976,648 H983 L979.5,644.5 Z M976,652 H983 L979.5,648.5 Z" fill="#777" stroke="none"/>
<rect x="976.5" y="661.5" width="6" height="5" stroke="#777" stroke-width="0.9"/>
<path d="M976,679 H983 L979.5,682.5 Z M976,683 H983 L979.5,686.5 Z" fill="#777" stroke="none"/>
<path d="M1315.1,142.6 H1332.7 M1315.1,145.3 H1332.7 M1344.4,146.4 H1352 M1344.4,149.7 H1352" stroke="#b8b8b8" stroke-width="1"/>
<path d="M1317,180.2 H1332 M1317.5,180 L1328.3,169.2 Q1329.5,168 1330.7,169.2 Q1331.9,170.4 1330.7,171.6 L1321.5,180.8 M1320.3,175.5 L1324,179.3" stroke="#333" stroke-width="1.1" stroke-linejoin="round"/>
<path d="M1345.5,172 Q1348,167.5 1351,170.5 Q1352.5,172.5 1349,176 L1345.5,179.5 M1345.5,183.2 H1352" stroke="#333" stroke-width="1.1"/>
<path d="M1319,203.3 V216 L1322.2,213.2 L1324.5,218 L1326.5,217 L1324.2,212.3 L1329.5,211.8 Z" stroke="#333" stroke-width="1.1" stroke-linejoin="round"/>
<path d="M1346.5,206 L1349,207.5 L1346.5,209 M1347.3,212.5 V214" stroke="#444" stroke-width="1"/>
<rect x="1317.3" y="247" width="12.6" height="7.8" rx="1.5" stroke="#333" stroke-width="1.1"/><path d="M1319.5,247 V244.5 Q1319.5,240.3 1323.6,240.3 Q1327.7,240.3 1327.7,244.5 V247" stroke="#333" stroke-width="1.1"/>
<path d="M1346,242 Q1348.5,242 1348.5,244.5 V246.5 Q1348.5,248 1349.8,248 Q1348.5,248 1348.5,249.5 V252 Q1348.5,254.5 1346,254.5" stroke="#444" stroke-width="1"/>
<path d="M1317,275.5 H1323.5 M1317,281.6 H1323.5 M1317,287.7 H1323.5 M1326.5,274.5 Q1329,274.5 1329,277 V279.5 Q1329,281.6 1331.5,281.6 Q1329,281.6 1329,283.7 V286.2 Q1329,288.7 1326.5,288.7" stroke="#333" stroke-width="1.1"/>
<path d="M1346,275.5 Q1348.5,275.5 1348.5,278 V280 Q1348.5,281.6 1350,281.6 Q1348.5,281.6 1348.5,283.2 V285.5 Q1348.5,288 1346,288" stroke="#444" stroke-width="1"/>
<path d="M1316.5,313 H1332.5 M1316.5,318.5 H1332.5 M1316.5,324 H1332.5" stroke="#c4c4c4" stroke-width="1"/><rect x="1327" y="311" width="3" height="4" fill="#e9e9e9" stroke="#c4c4c4" stroke-width="0.9"/><rect x="1319" y="316.5" width="3" height="4" fill="#e9e9e9" stroke="#c4c4c4" stroke-width="0.9"/><rect x="1322.5" y="322" width="3" height="4" fill="#e9e9e9" stroke="#c4c4c4" stroke-width="0.9"/>
<path d="M1345.5,315 H1352 M1345.5,320 H1352 M1345.5,324.5 H1352" stroke="#c4c4c4" stroke-width="1"/><rect x="1349" y="313.5" width="3" height="4" fill="#e9e9e9" stroke="#c4c4c4" stroke-width="0.9"/>
<path d="M1318.5,351.5 A6.8,6.8 0 1 1 1318.2,357.5" stroke="#333" stroke-width="1.1"/><path d="M1316.8,354 L1318.7,357.6 L1321.6,355.3" stroke="#333" stroke-width="1.1"/><path d="M1324.5,351.5 V355.5 L1327,358.2" stroke="#333" stroke-width="1.1"/>
<path d="M1346.3,349.5 A6.5,6.5 0 0 1 1346.3,362" stroke="#444" stroke-width="1"/><path d="M1346.5,357 L1348,358.5" stroke="#444" stroke-width="1"/>
<rect x="1316.5" y="384.2" width="14.8" height="14.2" rx="1.2" stroke="#333" stroke-width="1.1"/><path d="M1320.5,384.5 V394.5 H1328.5 M1322.5,387.8 H1328.5 V390.3 H1322.5 Z M1322.5,392 H1328.5" stroke="#333" stroke-width="1"/>
<path d="M1344.5,386.5 H1351 V399 H1344.5 M1346,390.5 H1348.5 M1346,393.5 H1348.5 M1346,396 H1348.5" stroke="#444" stroke-width="1"/>
<path d="M1304,652.2 H1344 M1345,656.5 H1363" stroke="#d6d6d6" stroke-width="1"/>
<circle cx="1317.5" cy="677.3" r="1.2" fill="#999" stroke="none"/><circle cx="1323.2" cy="677.3" r="1.2" fill="#999" stroke="none"/><circle cx="1329" cy="677.3" r="1.2" fill="#999" stroke="none"/><circle cx="1348.5" cy="681.3" r="1.1" fill="#999" stroke="none"/>
<path d="M66.8,698 V721 M155.2,698 V721 M391,698 V721 M535.6,698 V721 M626.7,698 V721 M808.7,698 V721 M1065.4,698 V721" stroke="#e0e0e0" stroke-width="1"/>
<path d="M634.5,704.5 H649 V713 H644.5 L641.8,715.5 L639.2,713 H634.5 Z" stroke="#444" stroke-width="1.1" stroke-linejoin="round"/><path d="M638.8,708.6 L641,710.7 L645,706.5" stroke="#444" stroke-width="1.1"/>
<path d="M796.5,707.8 L799.5,710 L796.5,712.2 Z" fill="#888" stroke="none"/>
<path d="M854.2,705.2 V703.3 H863.8 V713.3 H861.9" stroke="#aaa" stroke-width="1"/><rect x="851.3" y="705.6" width="10.2" height="10.7" stroke="#333" stroke-width="1.1"/><path d="M855,708 V712.5 H858.5" stroke="#333" stroke-width="1.1"/>
<path d="M878.8,707 V703.9 H889 V717 H878.8 V712 M878.8,714 H889" stroke="#333" stroke-width="1.1"/><path d="M875.7,709.3 H883.6 M881.3,707 L883.6,709.3 L881.3,711.6" stroke="#333" stroke-width="1.1"/>
<path d="M900.5,707 V703.8 H903.7 M911.1,703.8 H914.3 V707 M914.3,713.7 V717 H911.1 M903.7,717 H900.5 V713.7 M902,715.5 L906,711.5 M912.8,705.3 L908.8,709.3" stroke="#333" stroke-width="1.1"/><path d="M902,712.3 V715.5 H905.2 M909.6,705.3 H912.8 V708.5" stroke="#333" stroke-width="1.1"/>
<path d="M932.2,705 Q929,703.8 924.9,704 V716.3 Q929,716 932.2,717.5 Q935.5,716 939.5,716.3 V704 Q935.5,703.8 932.2,705 Z M932.2,705 V717.5" stroke="#333" stroke-width="1.1" stroke-linejoin="round"/>
<path d="M952.3,703.2 H963 L966,706.2 V717 H952.3 Z M963,703.2 V706.2 H966" stroke="#333" stroke-width="1.2" stroke-linejoin="round"/><path d="M955,708.7 H963.3 M955,711.8 H963.3" stroke="#333" stroke-width="1.1"/>
<rect x="977.3" y="703.3" width="14.5" height="13.5" rx="1.2" stroke="#333" stroke-width="1.1"/><path d="M980,707 H981 M983,707 H989 M980,710 H981 M983,710 H989 M980,713 H981 M983,713 H989" stroke="#333" stroke-width="1.1"/>
<circle cx="1010.4" cy="710" r="7" stroke="#333" stroke-width="1.1"/><ellipse cx="1010.4" cy="710" rx="3" ry="7" stroke="#333" stroke-width="1"/><path d="M1003.6,707.5 H1017.2 M1003.6,712.5 H1017.2" stroke="#333" stroke-width="1"/>
<path d="M1027.8,711.5 Q1036,702.5 1044,711.5 Q1036,720.5 1027.8,711.5 Z" stroke="#333" stroke-width="1.1"/><circle cx="1036" cy="711.5" r="2.6" stroke="#333" stroke-width="1.1"/><path d="M1036,701.3 V704.5 M1030,703 L1031.8,705.5 M1042,703 L1040.2,705.5" stroke="#333" stroke-width="1.1"/>
<path d="M1047.5,708 H1052.5 L1050.0,710.7 Z" fill="#888" stroke="none"/>
<path d="M1104.5,708.5 H1109.5 L1107.0,711.2 Z" fill="#888" stroke="none"/>
<path d="M1120,709.8 H1131.7" stroke="#333" stroke-width="1.6"/>
<path d="M1143,710.5 H1188" stroke="#666" stroke-width="1"/><path d="M1200,710.5 H1281.2" stroke="#b0b0b0" stroke-width="1"/><path d="M1211.2,706.5 V714.5" stroke="#bbb" stroke-width="0.8"/>
<circle cx="1194" cy="710.3" r="5.7" fill="#f0f0f0" stroke="#555" stroke-width="1.1"/>
<path d="M1292.4,710.1 H1303.6 M1298,704.5 V715.7" stroke="#333" stroke-width="1.6"/>
<path d="M1318.3,708 V705 H1321.3 M1327,705 H1330 V708 M1330,712.3 V715.3 H1327 M1321.3,715.3 H1318.3 V712.3" stroke="#333" stroke-width="1.1"/><circle cx="1324.2" cy="710.2" r="0.8" fill="#333" stroke="none"/>
<path d="M1345.5,708.5 H1349.8 V711.5 M1349.8,716 V719.2 H1345.5" stroke="#333" stroke-width="1.1"/>
<path d="M0,737 H5.5 V743.8 H0 Z M6.8,736 L12,735.3 V743.8 H6.8 Z M0,745.2 H5.5 V751.8 H0 Z M6.8,745.2 H12 V752.6 L6.8,752 Z" fill="#fff" stroke="none"/>
<circle cx="50.5" cy="741.2" r="4.3" stroke="#222" stroke-width="1.2"/><path d="M47.5,744.3 L40.2,751.5" stroke="#222" stroke-width="1.3"/>
<circle cx="399.2" cy="743.8" r="11.3" fill="#f2f2f2" stroke="none"/><path d="M394.5,737.5 L399.2,744 L403.9,737.5 M399.2,744 V751" stroke="#d42a2a" stroke-width="2.2"/>
<g stroke="none"><path d="M438,736.5 H459 V742 H438 Z" fill="#9a3a8a"/><path d="M440,737.5 H458.5 V739.5 H440 Z" fill="#d070c0"/><path d="M438,742.5 H459 V748 H438 Z" fill="#101040"/><path d="M440,744 H458.5 V746.3 H440 Z" fill="#4a4ad0"/><path d="M438,748.5 H459 V752.3 H438 Z" fill="#105a10"/><path d="M440,749.5 H458.5 V751.2 H440 Z" fill="#3ac83a"/><path d="M436.5,736 L440.5,739 L436.5,742 L440.5,745 L436.5,748 L440.5,751 V753 H436.5 Z" fill="#f0e8d0"/></g><path d="M446,735.8 L451.5,752.5 M452,736 L448,741" stroke="#e8d0a0" stroke-width="1.2"/>
<rect x="486.2" y="733.3" width="21" height="20.4" rx="3.5" fill="#3589f2" stroke="none"/><path d="M490,740.5 H495 L496.2,744 L497.4,740.5 H504.2 L500.4,749.3 H498.4 L497,745.6 L495.6,749.3 H493.6 Z" stroke="#e8f4ff" stroke-width="1.5" stroke-linejoin="round"/>
<path d="M379,763.2 H419.3 M428,763.2 H468 M473.5,763.2 H517.4" stroke="#7ab0e8" stroke-width="1.6"/>
<path d="M398.8,766.5 H439 M447.8,766.5 H488 M493,766.5 H537" stroke="#78a8e0" stroke-width="3"/>
<path d="M1149,746.7 L1155,740.3 L1161,746.7" stroke="#fff" stroke-width="1.2"/>
<path d="M1175.5,739 V741.5 M1178.5,739 V741.5 M1174.3,741.5 H1179.7 V744 Q1179.7,746 1177,746 Q1174.3,746 1174.3,744 Z M1177,746 V748.5" stroke="#fff" stroke-width="1.1"/><rect x="1180.5" y="741" width="6" height="7" stroke="#fff" stroke-width="1"/><rect x="1181.8" y="742.3" width="3.5" height="4.5" fill="#fff" stroke="none"/><path d="M1187,743 V746" stroke="#fff" stroke-width="1.2"/>
<path d="M1304.8,736 H1321.2 V748.2 H1315.5 L1313,751.5 L1310.5,748.2 H1304.8 Z" fill="#fff" stroke="none"/><path d="M1307.5,739.8 H1318.5 M1307.5,742.6 H1318.5 M1307.5,745.3 H1314" stroke="#1c1d35" stroke-width="1.1"/>
<path d="M1341.1,724 V763 M1361.3,724 V768" stroke="#3a3a55" stroke-width="1"/>
</svg>
</body></html>
